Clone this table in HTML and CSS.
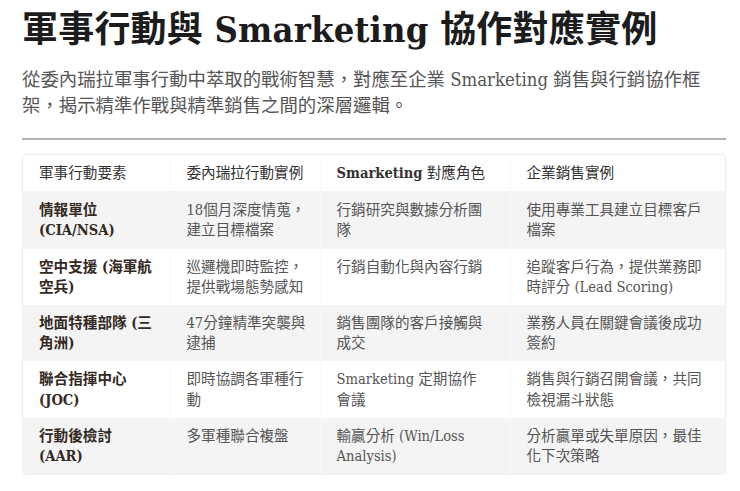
FILE: index.html
```html
<!DOCTYPE html>
<html lang="zh-Hant">
<head>
<meta charset="utf-8">
<title>軍事行動與 Smarketing 協作對應實例</title>
<link rel="stylesheet" href="styles.css">
</head>
<body>
<main class="page">
  <h1 class="title">軍事行動與 Smarketing 協作對應實例</h1>
  <p class="lead">從委內瑞拉軍事行動中萃取的戰術智慧，對應至企業 Smarketing 銷售與行銷協作框架，揭示精準作戰與精準銷售之間的深層邏輯。</p>
  <hr class="rule">
  <div class="table-wrap">
    <table class="map">
      <colgroup>
        <col class="c1"><col class="c2"><col class="c3"><col class="c4">
      </colgroup>
      <thead>
        <tr>
          <th>軍事行動要素</th>
          <th>委內瑞拉行動實例</th>
          <th><span class="bold-lat">Smarketing</span> 對應角色</th>
          <th>企業銷售實例</th>
        </tr>
      </thead>
      <tbody>
        <tr>
          <td class="key">情報單位 (CIA/NSA)</td>
          <td>18個月深度情蒐，建立目標檔案</td>
          <td>行銷研究與數據分析團隊</td>
          <td>使用專業工具建立目標客戶檔案</td>
        </tr>
        <tr>
          <td class="key">空中支援 (海軍航空兵)</td>
          <td>巡邏機即時監控，提供戰場態勢感知</td>
          <td>行銷自動化與內容行銷</td>
          <td>追蹤客戶行為，提供業務即時評分 (Lead Scoring)</td>
        </tr>
        <tr>
          <td class="key">地面特種部隊 (三角洲)</td>
          <td>47分鐘精準突襲與逮捕</td>
          <td>銷售團隊的客戶接觸與成交</td>
          <td>業務人員在關鍵會議後成功簽約</td>
        </tr>
        <tr>
          <td class="key">聯合指揮中心 (JOC)</td>
          <td>即時協調各軍種行動</td>
          <td>Smarketing 定期協作會議</td>
          <td>銷售與行銷召開會議，共同檢視漏斗狀態</td>
        </tr>
        <tr>
          <td class="key">行動後檢討 (AAR)</td>
          <td>多軍種聯合複盤</td>
          <td>輸贏分析 (Win/Loss Analysis)</td>
          <td>分析贏單或失單原因，最佳化下次策略</td>
        </tr>
      </tbody>
    </table>
  </div>
</main>
</body>
</html>
```

FILE: styles.css
```css
* { box-sizing: border-box; }

html, body {
  margin: 0;
  padding: 0;
  background: #ffffff;
}

body {
  font-family: "DejaVu Serif Condensed", "DejaVu Serif", "Noto Sans CJK TC", serif;
  font-stretch: condensed;
  color: #333333;
}

.page {
  width: 704px;
  margin-left: 22px;
  padding-top: 8px;
}

.title {
  margin: 0;
  font-size: 36px;
  line-height: 43px;
  font-weight: 700;
  color: #1c1c1c;
  letter-spacing: 0.2px;
}

.lead {
  margin: 16px 0 0;
  font-size: 18.4px;
  line-height: 25.5px;
  color: #555555;
}

.rule {
  margin: 20px 0 0;
  border: 0;
  height: 2px;
  background: #b3b3b3;
}

.table-wrap {
  margin-top: 14px;
  border: 1px solid #ededed;
  border-radius: 4px;
  overflow: hidden;
}

.map {
  width: 100%;
  border-collapse: collapse;
  table-layout: fixed;
  font-size: 14.6px;
  line-height: 20.2px;
}

.c1 { width: 147px; }
.c2 { width: 150px; }
.c3 { width: 190px; }
.c4 { width: auto; }

.map th,
.map td {
  padding: 8px 16px;
  text-align: left;
  vertical-align: top;
  border-left: 1px solid #f9f9f9;
}

.map td:nth-child(2) {
  padding-right: 11px;
}

.map td:nth-child(3) {
  padding-right: 22px;
}

.map th:first-child,
.map td:first-child {
  border-left: 0;
}

.map th {
  font-weight: 400;
  color: #333333;
  background: #ffffff;
  border-bottom: 1px solid #f4f4f4;
  white-space: nowrap;
}

.bold-lat {
  font-weight: 700;
}

.map td {
  color: #555555;
}

.map td.key {
  font-weight: 700;
  color: #33291f;
}

.map tbody tr:nth-child(odd) td {
  background: #f4f4f4;
}

.map tbody tr:nth-child(even) td {
  background: #ffffff;
}
```
